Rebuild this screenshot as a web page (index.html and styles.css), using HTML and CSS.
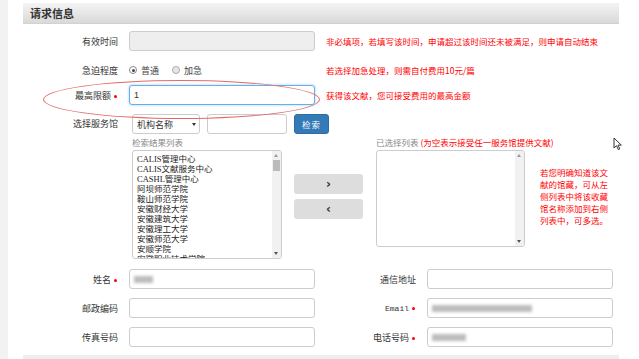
FILE: index.html
```html
<!DOCTYPE html>
<html lang="zh">
<head>
	<meta charset="UTF-8">
	<title>请求信息</title>
	<link rel="stylesheet" href="styles.css">
</head>
<body>

	<div class="panel">
		<div class="panel-title">请求信息</div>

		<div class="row row-first">
			<label class="label">有效时间</label>
			<input type="text" class="field" disabled>
			<span class="note">非必填项，若填写该时间，申请超过该时间还未被满足，则申请自动结束</span>
		</div>

		<div class="row row-radio">
			<label class="label">急迫程度</label>
			<div class="radios">
				<label class="radio"><span class="dot checked"></span>普通</label>
				<label class="radio"><span class="dot"></span>加急</label>
			</div>
			<span class="note">若选择加急处理，则需自付费用10元/篇</span>
		</div>

		<div class="row row-money">
			<label class="label">最高限额<span class="star"></span></label>
			<input type="text" class="field focus" value="1">
			<span class="note">获得该文献，您可接受费用的最高金额</span>
		</div>

		<div class="service-row">
			<label class="label">选择服务馆</label>
			<div class="service">
				<div class="search-bar">
					<div class="select-wrap">
						<select class="select">
							<option>机构名称</option>
						</select>
					</div>
					<input type="text" class="field small">
					<button class="btn-search">检索</button>
				</div>

				<div class="pick">
					<div class="pick-col">
						<div class="caption">检索结果列表</div>
						<div class="listbox tall">
							<div class="items">
								<div>CALIS管理中心</div>
								<div>CALIS文献服务中心</div>
								<div>CASHL管理中心</div>
								<div>阿坝师范学院</div>
								<div>鞍山师范学院</div>
								<div>安徽财经大学</div>
								<div>安徽建筑大学</div>
								<div>安徽理工大学</div>
								<div>安徽师范大学</div>
								<div>安顺学院</div>
								<div>安徽职业技术学院</div>
							</div>
							<div class="scrollbar">
								<span class="arrow-up"></span>
								<span class="thumb"></span>
								<span class="arrow-down"></span>
							</div>
						</div>
					</div>

					<div class="move-btns">
						<button class="btn-move">&#8250;</button>
						<button class="btn-move">&#8249;</button>
					</div>

					<div class="pick-col right">
						<div class="caption">已选择列表 <span class="red">(为空表示接受任一服务馆提供文献)</span></div>
						<div class="listbox short">
							<div class="items"></div>
							<div class="scrollbar">
								<span class="arrow-up"></span>
								<span class="arrow-down"></span>
							</div>
						</div>
					</div>

					<p class="pick-note">若您明确知道该文献的馆藏，可从左侧列表中将该收藏馆名称添加到右侧列表中，可多选。</p>
				</div>
			</div>
		</div>

		<div class="contact">
			<label class="label">姓名<span class="star"></span></label>
			<div class="field"><span class="blur" style="width: 19px"></span></div>
			<label class="label">通信地址</label>
			<div class="field"></div>

			<label class="label">邮政编码</label>
			<div class="field"></div>
			<label class="label mono">Email<span class="star"></span></label>
			<div class="field"><span class="blur" style="width: 100px"></span></div>

			<label class="label">传真号码</label>
			<div class="field"></div>
			<label class="label">电话号码<span class="star"></span></label>
			<div class="field"><span class="blur" style="width: 34px"></span></div>
		</div>

		<div class="panel-foot"></div>
	</div>

	<!-- segno rosso attorno al campo -->
	<div class="ellipse"></div>

	<svg class="cursor" width="10" height="14" viewBox="0 0 10 14">
		<path d="M1 1 L1 11 L3.5 8.7 L5.3 12.6 L6.8 11.9 L5 8.1 L8.3 8.1 Z" fill="#fff" stroke="#333" stroke-width="1" stroke-linejoin="round"/>
	</svg>

</body>
</html>
```

FILE: styles.css
```css
body {
	margin: 0;
	height: 359px;
	overflow: hidden;
	position: relative;
	box-sizing: border-box;
	border-left: 8px solid #f2f2f2;
	background-color: #fff;
	font-family: "Noto Sans CJK SC", "Liberation Sans", sans-serif;
	color: #333;
}

.panel {
	margin-left: 15px;
	width: 596px;
	padding-top: 3px;
}

.panel-title {
	height: 21px;
	line-height: 21px;
	padding-left: 7px;
	box-sizing: border-box;
	background: linear-gradient(#f4f4f4, #d9d9d9);
	border-bottom: 1px solid #d2d2d2;
	font-size: 11px;
	font-weight: bold;
	color: #333;
}

.row {
	display: grid;
	grid-template-columns: 95px 186px auto;
	column-gap: 11px;
	align-items: center;
	height: 20px;
}

.row-first {
	margin-top: 7px;
}

.row-radio {
	margin-top: 8px;
	height: 22px;
}

.row-money {
	margin-top: 4px;
}

.label {
	text-align: right;
	font-size: 9px;
	color: #333;
}

.label.mono {
	font-family: "Liberation Mono", monospace;
	font-size: 8px;
	color: #333;
}

.star {
	display: inline-block;
	width: 3px;
	height: 3px;
	margin-left: 3px;
	margin-right: 1px;
	vertical-align: middle;
	background-color: #f00;
	border-radius: 50%;
}

.note {
	font-size: 8.5px;
	color: #f00;
	white-space: nowrap;
}

.field {
	width: 186px;
	height: 20px;
	box-sizing: border-box;
	border: 1px solid #ccc;
	border-radius: 3px;
	padding: 0 4px;
	font-size: 9px;
	font-family: "Liberation Sans", sans-serif;
	color: #333;
	background-color: #fff;
	display: flex;
	align-items: center;
}

.field:disabled {
	background-color: #eee;
}

.field.focus {
	border-color: #66afe9;
	box-shadow: 0 0 3px rgba(102, 175, 233, 0.6);
	outline: none;
}

.field.small {
	width: 80px;
}

.blur {
	display: inline-block;
	height: 7px;
	background-color: #bdbdbd;
	filter: blur(1.5px);
}

.radios {
	display: flex;
	gap: 13px;
}

.radio {
	display: flex;
	align-items: center;
	gap: 4px;
	font-size: 9px;
	color: #444;
}

.dot {
	width: 6px;
	height: 6px;
	border-radius: 50%;
	border: 1px solid #aaa;
	background-color: #e6e6e6;
	position: relative;
}

.dot.checked {
	background-color: #fff;
	border-color: #888;
}

.dot.checked::after {
	content: "";
	position: absolute;
	left: 1.5px;
	top: 1.5px;
	width: 3px;
	height: 3px;
	border-radius: 50%;
	background-color: #444;
}

.service-row {
	display: grid;
	grid-template-columns: 95px auto;
	column-gap: 11px;
	margin-top: 9px;
}

.service-row .label {
	line-height: 20px;
}

.service {
	padding-left: 3px;
}

.search-bar {
	display: flex;
	gap: 7px;
	height: 20px;
}

.select-wrap {
	position: relative;
	width: 68px;
	height: 20px;
}

.select-wrap::after {
	content: "";
	position: absolute;
	right: 4px;
	top: 9px;
	border-left: 2px solid transparent;
	border-right: 2px solid transparent;
	border-top: 3px solid #333;
}

.select {
	appearance: none;
	display: block;
	width: 100%;
	height: 20px;
	box-sizing: border-box;
	border: 1px solid #ccc;
	border-radius: 3px;
	background-color: #fff;
	padding: 0 4px;
	font-family: "Noto Sans CJK SC", sans-serif;
	font-size: 9px;
	color: #333;
}

.btn-search {
	width: 35px;
	height: 20px;
	border: 1px solid #2e6da4;
	border-radius: 3px;
	background-color: #337ab7;
	color: #fff;
	font-family: "Noto Sans CJK SC", sans-serif;
	font-size: 8.5px;
	letter-spacing: 1px;
	padding: 0;
}

.pick {
	display: flex;
	align-items: flex-start;
}

.pick-col {
	width: 150px;
}

.pick-col.right {
	width: 149px;
	margin-left: 13px;
}

.caption {
	height: 16px;
	line-height: 16px;
	font-size: 8.5px;
	color: #888;
	white-space: nowrap;
}

.red {
	color: #f00;
}

.listbox {
	display: flex;
	box-sizing: border-box;
	border: 1px solid #ccc;
	border-radius: 3px;
	background-color: #fff;
	overflow: hidden;
}

.listbox.tall {
	height: 109px;
}

.listbox.short {
	height: 97px;
}

.items {
	flex: 1;
	padding: 3px 0 0 4px;
	font-family: "Liberation Serif", "Noto Sans CJK SC", serif;
	font-size: 8.5px;
	line-height: 10px;
	color: #222;
	overflow: hidden;
	white-space: nowrap;
}

.scrollbar {
	width: 9px;
	background-color: #f1f1f1;
	position: relative;
}

.arrow-up,
.arrow-down {
	position: absolute;
	left: 2px;
	border-left: 2.5px solid transparent;
	border-right: 2.5px solid transparent;
}

.arrow-up {
	top: 3px;
	border-bottom: 3px solid #999;
}

.arrow-down {
	bottom: 3px;
	border-top: 3px solid #555;
}

.thumb {
	position: absolute;
	left: 1px;
	top: 9px;
	width: 7px;
	height: 11px;
	background-color: #bbb;
}

.move-btns {
	display: flex;
	flex-direction: column;
	gap: 5px;
	margin-left: 12px;
	padding-top: 40px;
}

.btn-move {
	width: 69px;
	height: 20px;
	border: none;
	border-radius: 3px;
	background-color: #ddd;
	color: #333;
	font-family: "DejaVu Sans", sans-serif;
	font-size: 12px;
	font-weight: bold;
	line-height: 20px;
	padding: 0;
}

.pick-note {
	width: 70px;
	margin: 0 0 0 15px;
	padding-top: 32px;
	font-size: 8.5px;
	line-height: 12px;
	color: #f00;
}

.contact {
	display: grid;
	grid-template-columns: 95px 186px 90px 186px;
	column-gap: 11px;
	row-gap: 9px;
	align-items: center;
	grid-auto-rows: 20px;
	margin-top: 10px;
}

.panel-foot {
	margin-top: 8px;
	height: 6px;
	background-color: #eee;
}

.ellipse {
	position: absolute;
	left: 35px;
	top: 80px;
	width: 275px;
	height: 37px;
	border: 1px solid #e46a6a;
	border-radius: 50%;
}

.cursor {
	position: absolute;
	left: 605px;
	top: 137px;
}
```
